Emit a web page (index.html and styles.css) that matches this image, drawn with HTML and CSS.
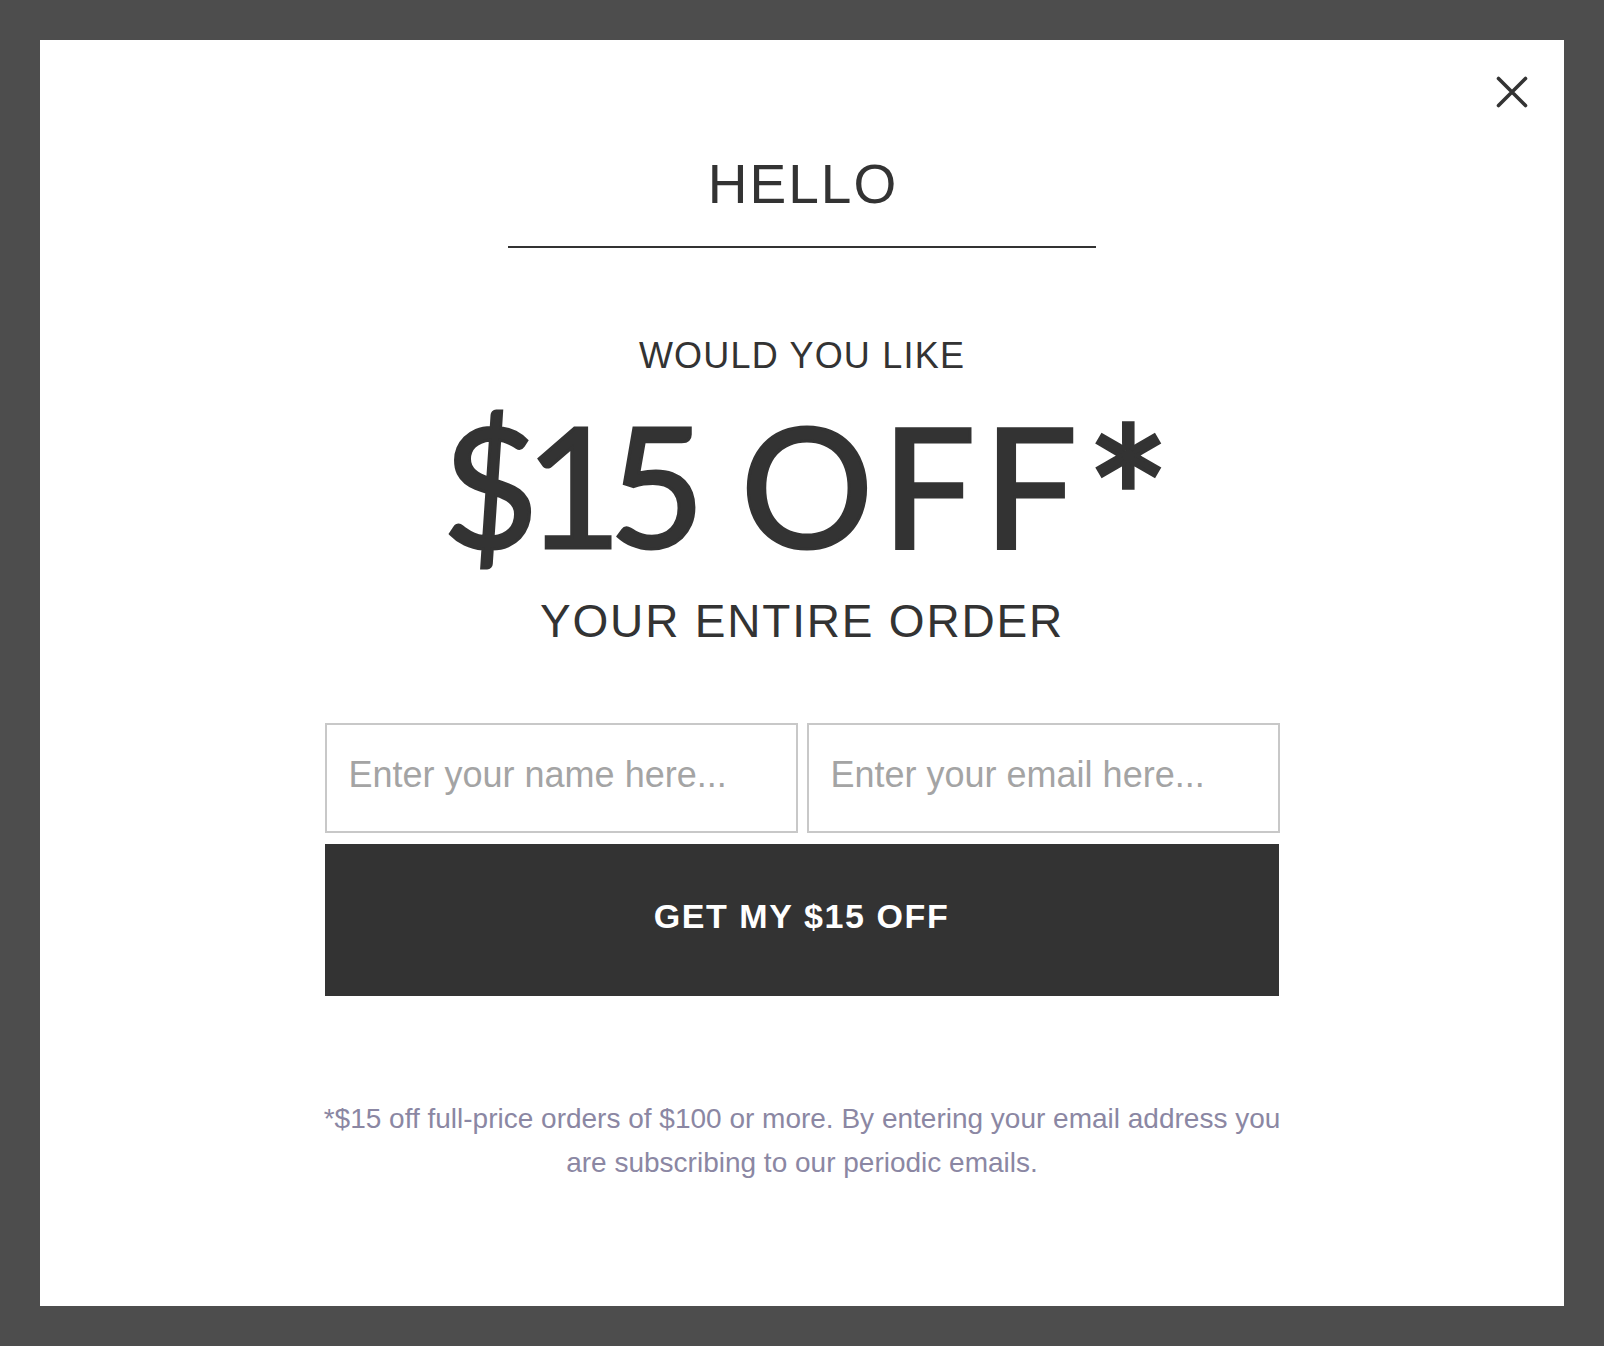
FILE: index.html
```html
<!DOCTYPE html>
<html lang="en">
<head>
<meta charset="utf-8">
<title>Hello - $15 off</title>
<link rel="stylesheet" href="styles.css">
</head>
<body>
<div class="overlay">
  <div class="modal">
    <button class="close" type="button" aria-label="Close">
      <svg width="32" height="32" viewBox="0 0 32 32" aria-hidden="true">
        <path d="M2.5 2.5 L29.5 29.5 M29.5 2.5 L2.5 29.5" stroke="#333" stroke-width="3.6" stroke-linecap="round" fill="none"/>
      </svg>
    </button>
    <h1 class="hello">HELLO</h1>
    <div class="rule"></div>
    <p class="lead">WOULD YOU LIKE</p>
    <p class="offer"><span class="amount">$15</span> <span class="word">OFF</span><span class="star">*</span></p>
    <p class="sub">YOUR ENTIRE ORDER</p>
    <form class="form">
      <div class="fields">
        <input class="field" type="text" placeholder="Enter your name here...">
        <input class="field" type="email" placeholder="Enter your email here...">
      </div>
      <button class="submit" type="button">GET MY $15 OFF</button>
    </form>
    <p class="fine">*$15 off full-price orders of $100 or more. By entering your email address you are subscribing to our periodic emails.</p>
  </div>
</div>
</body>
</html>
```

FILE: styles.css
```css
html, body {
  margin: 0;
  padding: 0;
}
body {
  background: #4d4d4d;
  font-family: "Liberation Sans", Arial, sans-serif;
  color: #333333;
}
.overlay {
  padding: 40px;
  width: 1524px;
}
.modal {
  position: relative;
  background: #ffffff;
  width: 1524px;
  height: 1266px;
  box-sizing: border-box;
  padding-top: 111px;
  display: flex;
  flex-direction: column;
  align-items: center;
}
.close {
  position: absolute;
  top: 36px;
  right: 36px;
  width: 32px;
  height: 32px;
  padding: 0;
  border: 0;
  background: none;
  cursor: pointer;
}
.close svg {
  display: block;
}
.hello {
  margin: 0;
  font-size: 55px;
  line-height: 66px;
  font-weight: 400;
  letter-spacing: 2px;
  text-indent: 2px;
}
.rule {
  margin-top: 29px;
  width: 588px;
  height: 2px;
  background: #333333;
}
.lead {
  margin: 86px 0 0;
  font-size: 36px;
  line-height: 44px;
  letter-spacing: 1.2px;
}
.offer {
  margin: 16px 0 0;
  height: 180px;
  font-family: "Lato", "Liberation Sans", sans-serif;
  font-size: 166px;
  line-height: 180px;
  font-weight: 400;
  white-space: nowrap;
  -webkit-text-stroke: 3px #333333;
}
.amount {
  letter-spacing: -13px;
  margin-right: 6px;
}
.word {
  letter-spacing: 8px;
}
.star {
  display: inline-block;
  margin-left: 6px;
  transform-origin: 50% 56px;
  transform: translate(2px, 5px) scale(1.22);
}
.sub {
  margin: 19px 0 0;
  font-size: 46px;
  line-height: 56px;
  letter-spacing: 1.8px;
}
.form {
  margin-top: 74px;
  width: 955px;
  display: flex;
  flex-direction: column;
  gap: 11px;
}
.fields {
  display: grid;
  grid-template-columns: 1fr 1fr;
  gap: 9px;
}
.field {
  box-sizing: border-box;
  height: 110px;
  border: 2px solid #c8c8c8;
  border-radius: 0;
  padding: 0 22px 6px;
  font-family: "Liberation Sans", Arial, sans-serif;
  font-size: 36px;
  color: #333333;
  background: #ffffff;
  outline: none;
  min-width: 0;
}
.field::placeholder {
  color: #a4a4a4;
}
.submit {
  width: 954px;
  height: 152px;
  border: 0;
  border-radius: 0;
  background: #333333;
  color: #ffffff;
  font-family: "Liberation Sans", Arial, sans-serif;
  font-size: 34px;
  font-weight: 700;
  letter-spacing: 1.6px;
  padding: 0 0 7px;
  cursor: pointer;
}
.fine {
  margin: 101px 0 0;
  width: 960px;
  text-align: center;
  font-size: 28px;
  line-height: 44px;
  color: #8b87a3;
}
```
